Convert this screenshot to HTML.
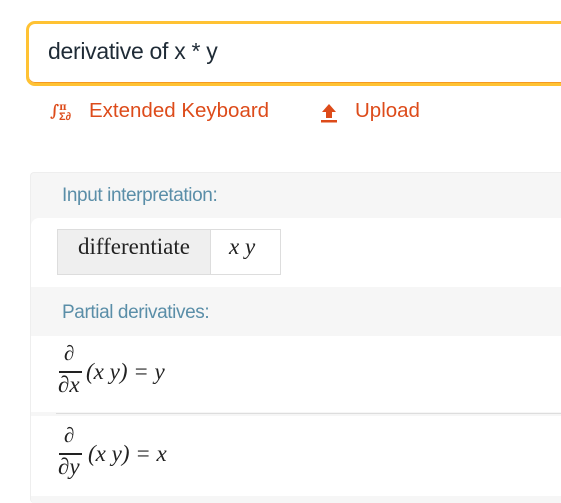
<!DOCTYPE html>
<html><head><style>
body{margin:0;width:561px;height:492px;background:#fff;overflow:hidden;position:relative;font-family:"Liberation Sans",sans-serif}
.box{position:absolute;left:26px;top:21px;width:560px;height:59px;border:3px solid #ffc233;border-radius:9px;box-shadow:inset 0 -1px 0 #f59a22}
.q{position:absolute;left:48px;top:38px;font-size:23px;color:#1f2b36;letter-spacing:-0.3px}
.lk{position:absolute;top:99px;font-size:20.5px;color:#dd4b1a}
.card{position:absolute;left:30px;top:172px;width:560px;height:330px;background:#f6f6f6;border-left:1px solid #eee;border-top:1px solid #eee;border-radius:4px}
.h{position:absolute;left:62px;font-size:19px;color:#5a8ea8;letter-spacing:-0.4px}
.w{position:absolute;left:31px;width:540px;background:#fff}
.m{font-family:"Liberation Serif",serif;position:absolute;color:#222}
</style></head><body>
<div class="box"></div>
<div class="q">derivative of x * y</div>
<div class="lk" style="left:50px;font-family:'DejaVu Serif',serif;font-size:16px;font-weight:bold;top:101px">∫<span style="font-size:10px;position:relative;top:-6px">π</span></div>
<div class="lk" style="left:59px;top:111px;font-size:11px;font-weight:bold">Σ∂</div>
<div class="lk" style="left:89px">Extended Keyboard</div>
<svg style="position:absolute;left:321px;top:103px" width="16" height="20"><path d="M8 1L1 9h4v6h6V9h4z" fill="#dd4b1a"/><rect x="0" y="17" width="16" height="2.5" fill="#dd4b1a"/></svg>
<div class="lk" style="left:355px">Upload</div>
<div class="card"></div>
<div class="h" style="top:185px">Input interpretation:</div>
<div class="w" style="top:218px;height:69px;border-top-left-radius:8px"></div>
<div style="position:absolute;left:57px;top:229px;width:152px;height:44px;background:#efefef;border:1px solid #ddd"></div>
<div style="position:absolute;left:210px;top:229px;width:69px;height:44px;background:#fff;border:1px solid #ddd"></div>
<div class="m" style="left:78px;top:234px;font-size:23px">differentiate</div>
<div class="m" style="left:229px;top:234px;font-size:23px;font-style:italic">x y</div>
<div class="h" style="top:302px">Partial derivatives:</div>
<div class="w" style="top:336px;height:76px"></div>
<div style="position:absolute;left:56px;top:413px;width:510px;height:1px;background:#ddd"></div>
<div class="w" style="top:416px;height:80px"></div>
<div class="m" style="left:64px;top:341px;font-size:21px;font-style:italic">∂</div>
<div style="position:absolute;left:59px;top:371px;width:23px;height:2px;background:#222"></div>
<div class="m" style="left:58px;top:372px;font-size:23px;font-style:italic">∂x</div>
<div class="m" style="left:86px;top:359px;font-size:23px;font-style:italic">(x y) = y</div>
<div class="m" style="left:64px;top:423px;font-size:21px;font-style:italic">∂</div>
<div style="position:absolute;left:59px;top:453px;width:23px;height:2px;background:#222"></div>
<div class="m" style="left:58px;top:454px;font-size:23px;font-style:italic">∂y</div>
<div class="m" style="left:88px;top:441px;font-size:23px;font-style:italic">(x y) = x</div>
</body></html>
